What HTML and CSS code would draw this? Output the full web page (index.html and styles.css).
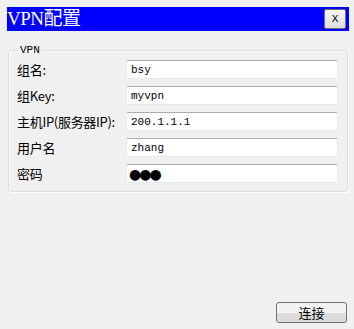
FILE: index.html
```html
<!DOCTYPE html>
<html lang="zh">
<head>
    <meta charset="UTF-8">
    <title>VPN配置</title>
    <link rel="stylesheet" href="styles.css">
</head>
<body>

    <div class="dialog">
        <div class="title-bar">
            <span class="title">VPN配置</span>
            <button type="button" class="close-btn">X</button>
        </div>

        <fieldset class="group">
            <legend>VPN</legend>
            <div class="row">
                <label>组名:</label>
                <input type="text" value="bsy">
            </div>
            <div class="row">
                <label>组Key:</label>
                <input type="text" value="myvpn">
            </div>
            <div class="row">
                <label>主机IP(服务器IP):</label>
                <input type="text" value="200.1.1.1">
            </div>
            <div class="row">
                <label>用户名</label>
                <input type="text" value="zhang">
            </div>
            <div class="row">
                <label>密码</label>
                <input type="text" class="pwd" value="●●●">
            </div>
        </fieldset>

        <div class="footer">
            <button type="button" class="connect-btn">连接</button>
        </div>
    </div>

</body>
</html>
```

FILE: styles.css
```css
body {
    margin: 0;
    background-color: #f0f0f0;
    font-family: "Noto Sans CJK SC", "DejaVu Sans", sans-serif;
    font-size: 12px;
    color: #000;
}

.dialog {
    width: 354px;
    height: 329px;
    display: flex;
    flex-direction: column;
    box-sizing: border-box;
    padding: 7px 5px 6px 7px;
}

.title-bar {
    height: 24px;
    background-color: #0000ff;
    display: flex;
    align-items: center;
    justify-content: space-between;
    padding: 0 3px 0 0;
}

.title {
    color: #fff;
    font-family: "Liberation Serif", "Noto Sans CJK SC", serif;
    font-size: 19px;
    line-height: 24px;
    letter-spacing: -0.5px;
}

.close-btn {
    width: 22px;
    height: 20px;
    padding: 0;
    border: 1px solid #707070;
    border-radius: 2px;
    background: linear-gradient(#f6f6f6, #dddddd);
    font-family: "Liberation Mono", monospace;
    font-size: 11px;
    color: #000;
}

.group {
    margin: 13px 1px 0 1px;
    padding: 4px 8px 6px 8px;
    border: 1px solid #d5dfe5;
    border-radius: 3px;
    box-shadow: inset 1px 1px 0 #fff, 1px 1px 0 #fff;
    display: flex;
    flex-direction: column;
    gap: 7px;
    height: 148px;
    box-sizing: border-box;
    min-width: 0;
}

.group legend {
    font-family: "Liberation Mono", monospace;
    font-size: 11px;
    padding: 0 2px;
    margin-left: 1px;
}

.row {
    display: flex;
    align-items: center;
    height: 19px;
}

.row label {
    width: 109px;
    flex-shrink: 0;
    font-size: 13px;
    letter-spacing: -0.3px;
}

.row input {
    width: 212px;
    height: 19px;
    box-sizing: border-box;
    border: 1px solid #e3e9ef;
    border-top-color: #abadb3;
    border-radius: 2px;
    background: #fff;
    padding: 0 4px;
    font-family: "Liberation Mono", monospace;
    font-size: 11px;
    color: #000;
    outline: none;
}

.row input.pwd {
    font-family: "DejaVu Sans", sans-serif;
    font-size: 14px;
    letter-spacing: -2px;
    padding-left: 2px;
}

.footer {
    margin-top: auto;
    display: flex;
    justify-content: flex-end;
}

.connect-btn {
    width: 71px;
    height: 21px;
    margin-right: 2px;
    border: 1px solid #707070;
    border-radius: 3px;
    background: linear-gradient(#f2f2f2 50%, #dcdcdc 50%);
    font-family: "Noto Sans CJK SC", sans-serif;
    font-size: 13px;
    padding: 0;
    color: #000;
}
```
